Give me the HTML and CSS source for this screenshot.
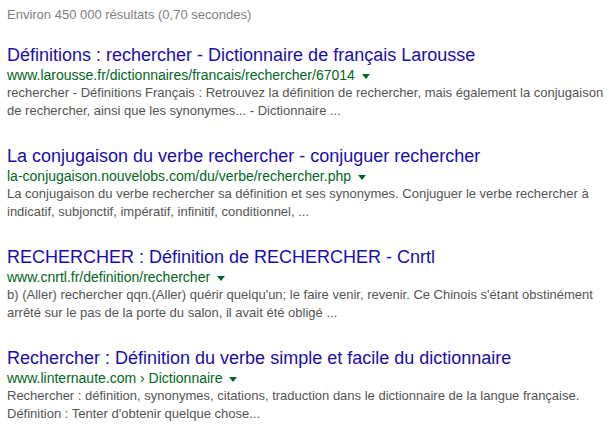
FILE: index.html
```html
<!DOCTYPE html>
<html lang="fr">
<head>
  <meta charset="UTF-8"/>
  <title>rechercher - Recherche</title>
  <link rel="stylesheet" href="styles.css">
</head>
<body>
  <div class="stats">Environ 450 000 résultats (0,70 secondes)</div>

  <div class="results">
    <div class="result">
      <h3 class="title"><a href="#">Définitions : rechercher - Dictionnaire de français Larousse</a></h3>
      <div class="url">www.larousse.fr/dictionnaires/francais/rechercher/67014 <span class="arrow"></span></div>
      <div class="snippet">rechercher - Définitions Français : Retrouvez la définition de rechercher, mais également la conjugaison de rechercher, ainsi que les synonymes... - Dictionnaire ...</div>
    </div>

    <div class="result">
      <h3 class="title"><a href="#">La conjugaison du verbe rechercher - conjuguer rechercher</a></h3>
      <div class="url">la-conjugaison.nouvelobs.com/du/verbe/rechercher.php <span class="arrow"></span></div>
      <div class="snippet">La conjugaison du verbe rechercher sa définition et ses synonymes. Conjuguer le verbe rechercher à indicatif, subjonctif, impératif, infinitif, conditionnel, ...</div>
    </div>

    <div class="result">
      <h3 class="title"><a href="#">RECHERCHER : Définition de RECHERCHER - Cnrtl</a></h3>
      <div class="url">www.cnrtl.fr/definition/rechercher <span class="arrow"></span></div>
      <div class="snippet">b) (Aller) rechercher qqn.(Aller) quérir quelqu'un; le faire venir, revenir. Ce Chinois s'étant obstinément arrêté sur le pas de la porte du salon, il avait été obligé ...</div>
    </div>

    <div class="result">
      <h3 class="title"><a href="#">Rechercher : Définition du verbe simple et facile du dictionnaire</a></h3>
      <div class="url">www.linternaute.com › Dictionnaire <span class="arrow"></span></div>
      <div class="snippet">Rechercher : définition, synonymes, citations, traduction dans le dictionnaire de la langue française. Définition : Tenter d'obtenir quelque chose...</div>
    </div>
  </div>
</body>
</html>
```

FILE: styles.css
```css
body { margin:0; padding:0 0 0 7px; background:#fff; font-family:"Liberation Sans", Arial, sans-serif; }
.stats { color:#808080; font-size:13px; line-height:16px; padding-top:7px; margin-bottom:20px; }
.results { width:602px; }
.result { margin-bottom:24px; }
.title { margin:0; font-size:18px; font-weight:normal; line-height:24px; }
.title a { color:#1a0dab; text-decoration:none; }
.url { color:#006621; font-size:14px; line-height:17px; }
.arrow { display:inline-block; width:0; height:0; margin-left:3px; vertical-align:middle; border-left:4px solid transparent; border-right:4px solid transparent; border-top:5px solid #006621; }
.snippet { color:#545454; font-size:13px; line-height:18px; }
```
